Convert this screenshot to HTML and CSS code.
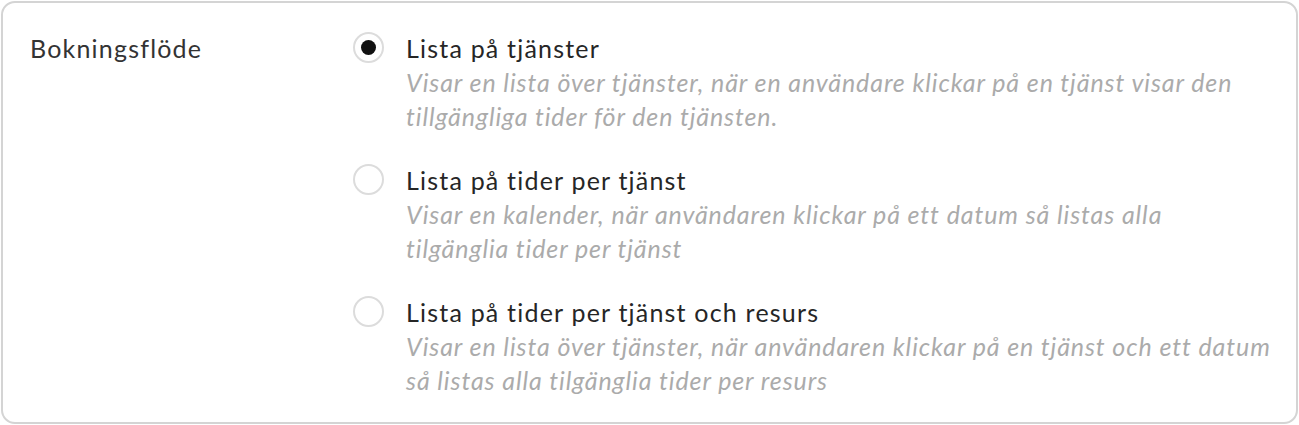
FILE: index.html
```html
<!DOCTYPE html>
<html lang="sv">
<head>
    <meta charset="UTF-8">
    <meta name="viewport" content="width=device-width, initial-scale=1.0">
    <title>Bokningsflöde</title>
    <link rel="stylesheet" href="styles.css">
</head>
<body>

    <div class="card">
        <div class="field-label">Bokningsflöde</div>
        <div class="options">
            <label class="option">
                <input type="radio" name="flow" value="services" checked>
                <span class="radio"></span>
                <span class="option-text">
                    <span class="option-title">Lista på tjänster</span>
                    <span class="option-desc">Visar en lista över tjänster, när en användare klickar på en tjänst visar den tillgängliga tider för den tjänsten.</span>
                </span>
            </label>
            <label class="option">
                <input type="radio" name="flow" value="times">
                <span class="radio"></span>
                <span class="option-text">
                    <span class="option-title">Lista på tider per tjänst</span>
                    <span class="option-desc">Visar en kalender, när användaren klickar på ett datum så listas alla<br>tilgänglia tider per tjänst</span>
                </span>
            </label>
            <label class="option">
                <input type="radio" name="flow" value="resources">
                <span class="radio"></span>
                <span class="option-text">
                    <span class="option-title">Lista på tider per tjänst och resurs</span>
                    <span class="option-desc">Visar en lista över tjänster, när användaren klickar på en tjänst och ett datum så listas alla tilgänglia tider per resurs</span>
                </span>
            </label>
        </div>
    </div>

</body>
</html>
```

FILE: styles.css
```css
body {
    font-family: Lato, "Noto Sans", sans-serif;
    background-color: #ffffff;
    color: #2a2a2a;
    margin: 0;
    padding: 0;
}

.card {
    display: grid;
    grid-template-columns: 323px 1fr;
    margin: 1px;
    height: 423px;
    box-sizing: border-box;
    border: 2px solid #d4d4d4;
    border-radius: 14px;
    padding: 28px 18px 0 27px;
    font-size: 25px;
    line-height: 34px;
    letter-spacing: 0.048em;
}

.field-label {
    color: #333;
}

.options {
    display: flex;
    flex-direction: column;
    gap: 30px;
}

.option {
    display: flex;
    align-items: flex-start;
    gap: 22px;
    cursor: pointer;
}

.option input {
    display: none;
}

.radio {
    flex: none;
    width: 31px;
    height: 31px;
    margin-top: 1px;
    box-sizing: border-box;
    border: 2px solid #dcdcdc;
    border-radius: 50%;
    display: flex;
    align-items: center;
    justify-content: center;
    background: #fff;
}

.option input:checked + .radio::after {
    content: "";
    width: 15px;
    height: 15px;
    border-radius: 50%;
    background: #111;
}

.option-text {
    display: flex;
    flex-direction: column;
}

.option-title {
    color: #262626;
}

.option-desc {
    font-style: italic;
    letter-spacing: 0.036em;
    color: #ababab;
}
```
